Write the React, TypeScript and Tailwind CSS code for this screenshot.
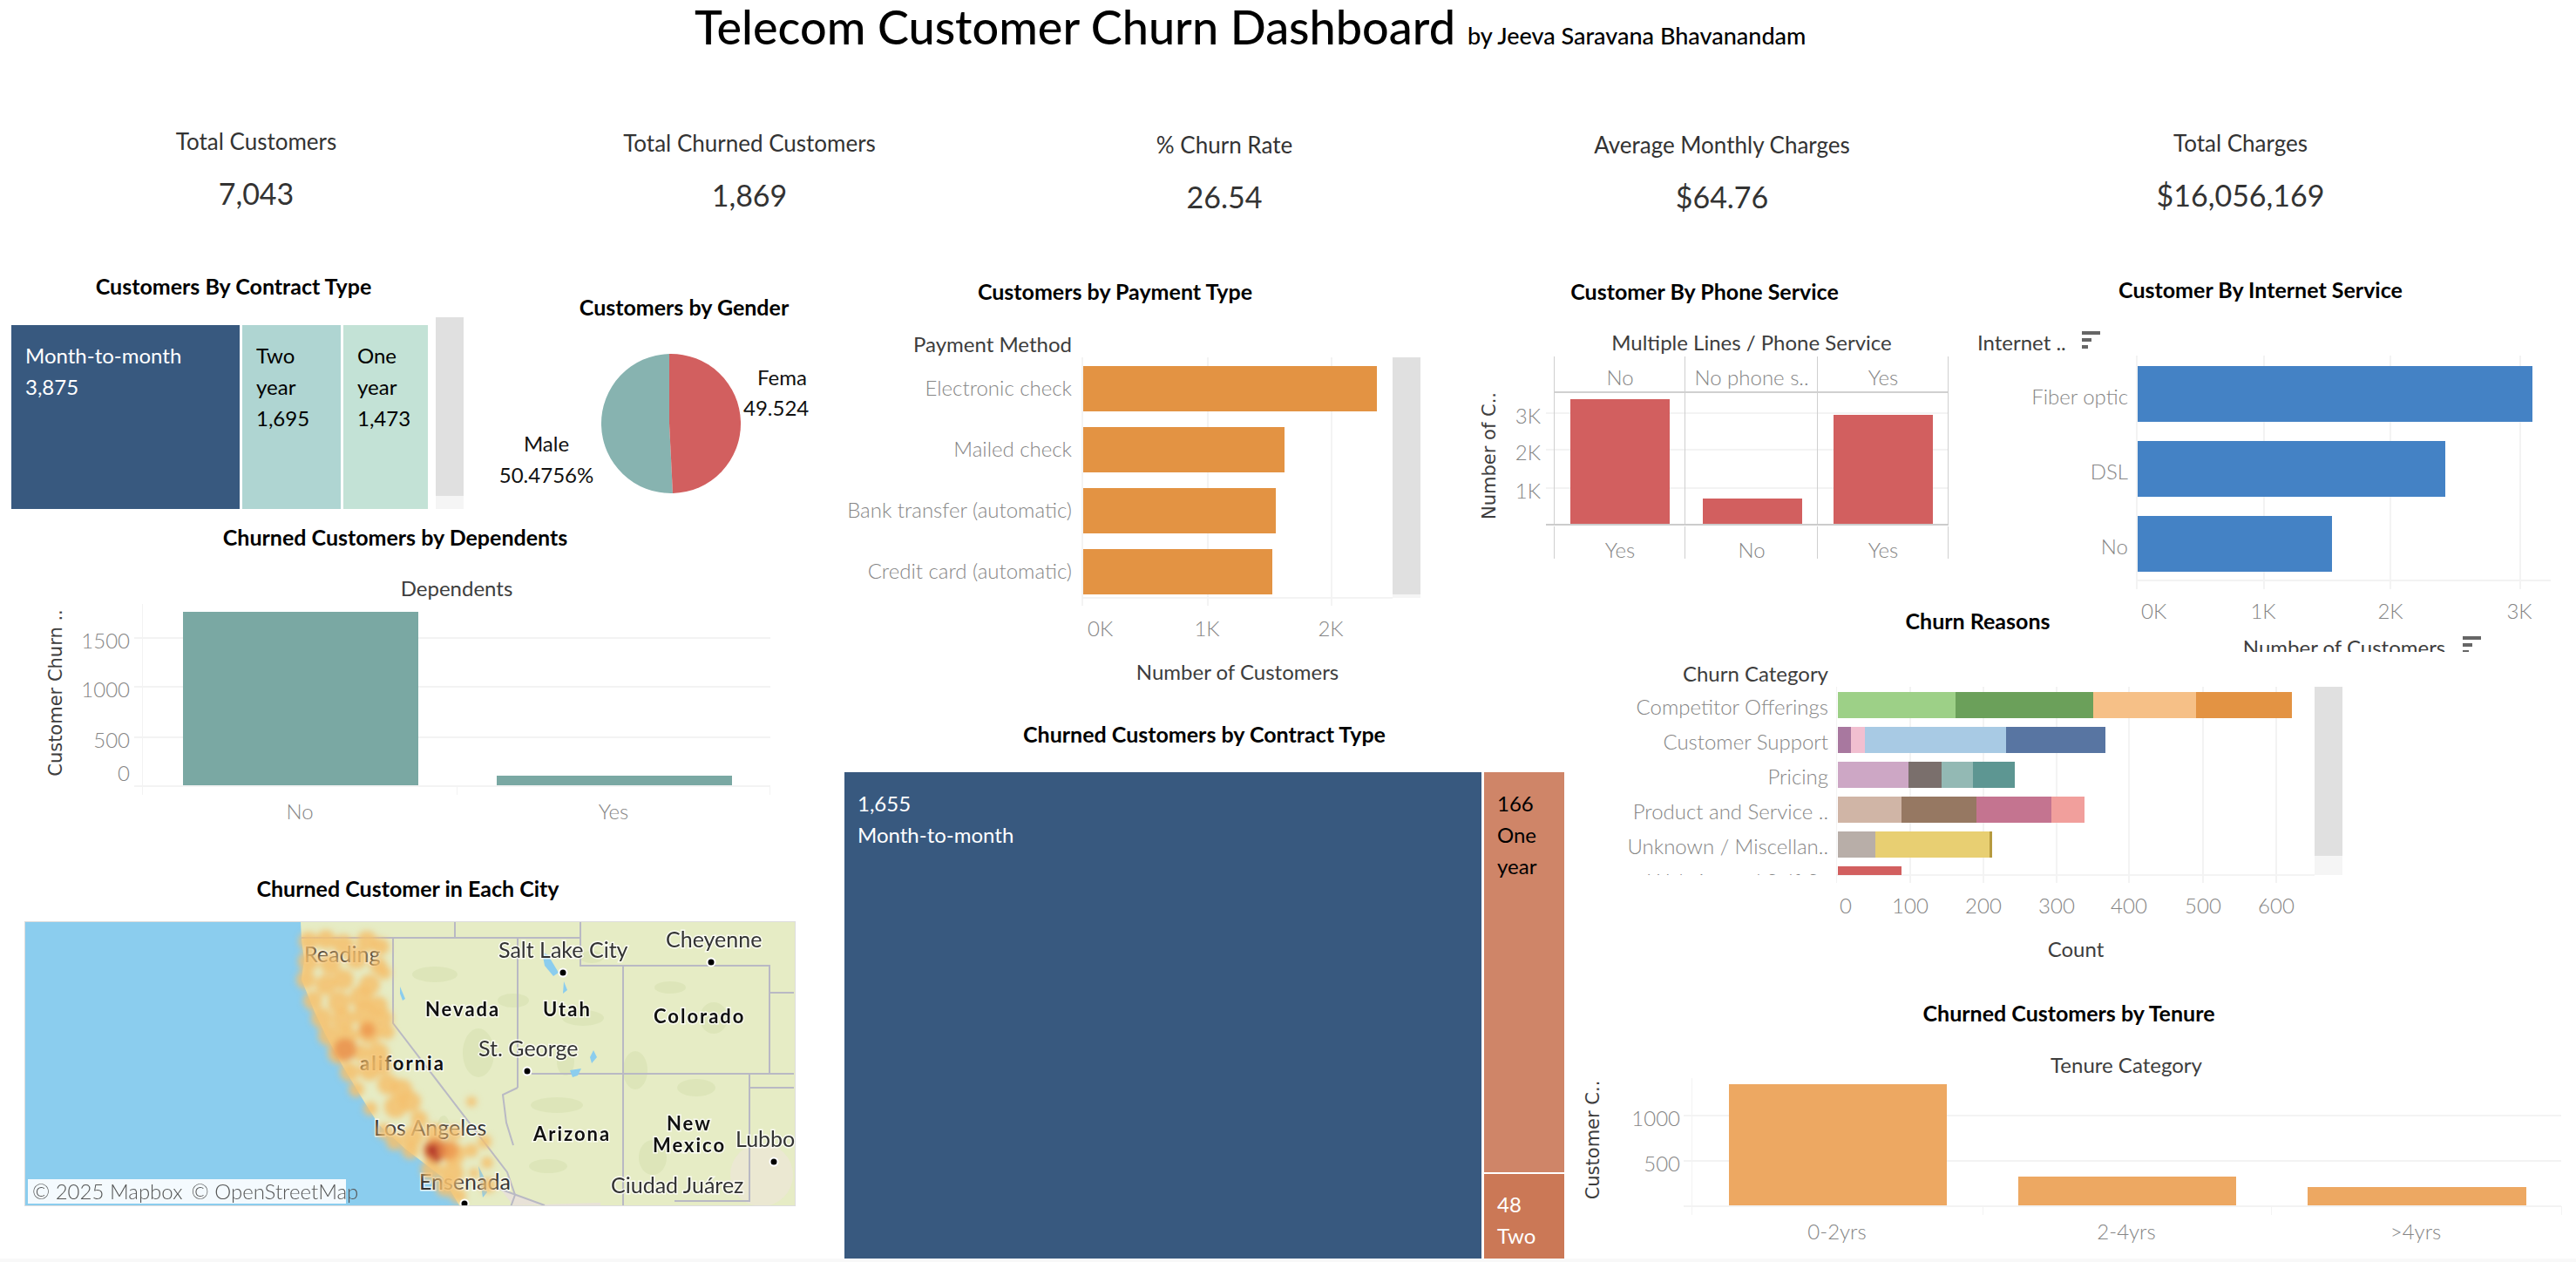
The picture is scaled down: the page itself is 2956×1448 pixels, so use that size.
import React from 'react'

const GRID = '#f3f3f3'
const AXIS = '#858585'
const DARK = '#3d3d3d'

type TxtProps = {
    x: number
    y: number
    children: React.ReactNode
    a?: 'start' | 'middle' | 'end'
    s?: number
    c?: string
    w?: number
    rot?: boolean
    wide?: boolean
}

// all chart svgs use page coordinates through their viewBox
function Txt({ x, y, children, a = 'start', s = 24, c = AXIS, w = 300, rot, wide }: TxtProps) {
    return (
        <text
            x={x}
            y={y}
            textAnchor={a}
            dominantBaseline="central"
            fontSize={s}
            fill={c}
            fontWeight={w}
            fontFamily={wide ? "'DejaVu Sans', sans-serif" : undefined}
            transform={rot ? `rotate(-90 ${x} ${y})` : undefined}
        >
            {children}
        </text>
    )
}

function Rect({ x1, y1, x2, y2, fill }: { x1: number; y1: number; x2: number; y2: number; fill: string }) {
    return <rect x={x1} y={y1} width={x2 - x1} height={y2 - y1} fill={fill} />
}

function SortIcon({ x, y }: { x: number; y: number }) {
    return (
        <g fill="#666666">
            <rect x={x} y={y} width={21} height={4} />
            <rect x={x} y={y + 8} width={11} height={4} />
            <rect x={x} y={y + 16} width={7} height={4} />
        </g>
    )
}

function Title({ className, children }: { className: string; children: React.ReactNode }) {
    return <h2 className={`text-center text-[25px] leading-[30px] font-bold text-black ${className}`}>{children}</h2>
}

function Kpi({ label, value, className }: { label: string; value: string; className: string }) {
    return (
        <div className={`text-center text-[#333333] ${className}`}>
            <div className="text-[26px] leading-[32px]">{label}</div>
            <div className="mt-[22px] text-[34px] leading-[44px]">{value}</div>
        </div>
    )
}

function ContractTreemap() {
    return (
        <div className="flex h-[211px] w-[478px] gap-[3px] text-[24px] leading-[36px]">
            <div className="w-[262px] bg-[#38597f] pt-[17px] pl-[16px] text-white">
                <div>Month-to-month</div>
                <div>3,875</div>
            </div>
            <div className="w-[113px] bg-[#afd5d2] pt-[17px] pl-[16px] text-black">
                <div>Two</div>
                <div>year</div>
                <div>1,695</div>
            </div>
            <div className="w-[97px] bg-[#c3e2d6] pt-[17px] pl-[16px] text-black">
                <div>One</div>
                <div>year</div>
                <div>1,473</div>
            </div>
        </div>
    )
}

function GenderPie() {
    return (
        <svg viewBox="536 400 400 180" className="mt-[33px] h-[180px] w-[400px]">
            <path d="M768 486 L768 406 A80 80 0 0 0 772 566 Z" fill="#87b3b0" />
            <path d="M768 486 L768 406 A80 80 0 0 1 772 566 Z" fill="#d25f5f" />
            <Txt x={869} y={432} c="#111111" w={400}>Fema</Txt>
            <Txt x={853} y={467} c="#111111" w={400}>49.524</Txt>
            <Txt x={627} y={508} a="middle" c="#111111" w={400}>Male</Txt>
            <Txt x={627} y={544} a="middle" c="#111111" w={400}>50.4756%</Txt>
        </svg>
    )
}

function DependentsChart() {
    return (
        <svg viewBox="0 640 936 300" className="h-[300px] w-[936px]">
            <Txt x={524} y={674} a="middle" c={DARK} w={400}>Dependents</Txt>
            <Rect x1={163} y1={693} x2={164} y2={912} fill={GRID} />
            <Rect x1={524} y1={902} x2={525} y2={912} fill={GRID} />
            <Rect x1={883} y1={902} x2={884} y2={912} fill={GRID} />
            {[732, 788, 846, 902].map(y => <Rect key={y} x1={154} y1={y - 1} x2={884} y2={y + 1} fill={GRID} />)}
            <Rect x1={210} y1={702} x2={480} y2={901} fill="#7aa8a3" />
            <Rect x1={570} y1={890} x2={840} y2={901} fill="#7aa8a3" />
            <Txt x={149} y={734} a="end">1500</Txt>
            <Txt x={149} y={790} a="end">1000</Txt>
            <Txt x={149} y={848} a="end">500</Txt>
            <Txt x={149} y={886} a="end">0</Txt>
            <Txt x={344} y={930} a="middle">No</Txt>
            <Txt x={704} y={930} a="middle">Yes</Txt>
            <Txt x={64} y={795} a="middle" s={21} c={DARK} w={400} rot wide>Customer Churn ..</Txt>
        </svg>
    )
}

const heat: [number, number, number][] = [
    [325, 22, 11], [345, 20, 11], [365, 26, 12], [392, 22, 12], [408, 28, 10],
    [325, 45, 12], [350, 48, 12], [380, 42, 12], [405, 50, 10],
    [322, 66, 11], [345, 72, 12], [365, 66, 12], [395, 72, 12], [412, 58, 8],
    [330, 90, 11], [360, 92, 13], [385, 86, 13], [405, 96, 11],
    [340, 110, 12], [365, 112, 13], [390, 106, 14], [412, 110, 10],
    [348, 130, 12], [370, 132, 12], [395, 126, 14], [415, 126, 9],
    [360, 150, 13], [385, 150, 10], [405, 150, 12],
    [372, 172, 11], [395, 170, 12], [410, 165, 10],
    [380, 192, 9], [416, 186, 12], [432, 192, 12],
    [396, 214, 8], [425, 212, 13], [442, 206, 12], [452, 226, 10], [512, 206, 6],
    [412, 240, 9], [424, 252, 10], [445, 246, 12], [470, 242, 11], [492, 242, 9], [527, 252, 8],
    [442, 262, 10], [470, 262, 14], [492, 266, 13], [512, 262, 8],
    [466, 284, 12], [490, 288, 13], [482, 304, 11], [497, 314, 9], [530, 276, 7], [515, 288, 6], [531, 302, 9],
]

const patches: [number, number, number, number][] = [
    [470, 60, 26, 9], [560, 90, 18, 8], [640, 110, 24, 9], [700, 170, 14, 22], [770, 190, 22, 10],
    [610, 210, 30, 9], [520, 150, 18, 28], [720, 270, 16, 20], [600, 280, 22, 8], [790, 110, 16, 18],
    [650, 40, 14, 7], [480, 240, 8, 18], [740, 75, 18, 7], [620, 160, 10, 16],
]

function MapLabel({ x, y, children, w = 400, bold }: { x: number; y: number; children: React.ReactNode; w?: number; bold?: boolean }) {
    return (
        <text
            x={x}
            y={y}
            dominantBaseline="central"
            fontSize={bold ? 22 : 25}
            fontWeight={bold ? 700 : w}
            letterSpacing={bold ? 2 : 0}
            fill={bold ? '#111111' : '#333333'}
            stroke="#ffffff"
            strokeOpacity={0.75}
            strokeWidth={3}
            paintOrder="stroke"
        >
            {children}
        </text>
    )
}

function CityMap() {
    return (
        <div className="relative ml-[28px] h-[327px] w-[885px] border border-[#dddddd]">
            <svg viewBox="0 0 883 325" className="h-[325px] w-[883px]">
                <defs>
                    <filter id="heatBlur"><feGaussianBlur stdDeviation="3.5" /></filter>
                </defs>
                <rect width={883} height={325} fill="#e6ecc5" />
                {patches.map(([x, y, rx, ry], i) => <ellipse key={i} cx={x} cy={y} rx={rx} ry={ry} fill="#d9e2b4" opacity={0.7} />)}
                <ellipse cx={845} cy={290} rx={36} ry={36} fill="#ebe8d2" />
                <path d="M545 306 L596 325 L660 325 L660 322 L560 325 Z" fill="#e8e2d8" />
                <path d="M316 0 L317 20 L320 43 L317 66 L332 103 L345 130 L363 163 L387 203 L406 233 L436 260 L479 293 L498 325 L0 325 L0 0 Z" fill="#8bcdee" />
                <g fill="none" stroke="#b9b9c4" strokeWidth={2}>
                    <path d="M317 18 L637 18 M493 0 L493 18 M637 0 L637 50 L854 50 L854 174 M581 174 L882 174 M854 81 L882 81 M686 50 L686 325 M831 174 L831 320 L745 320 M831 190 L882 190 M565 18 L565 190" />
                    <path d="M422 18 L422 116 L553 287 L562 313 L544 363" transform="translate(0 -57) translate(0 57)" />
                    <path d="M544 306 L596 325" />
                    <path d="M565 190 L548 198 L552 230 L560 256" />
                </g>
                <g fill="#8bcdee">
                    <path d="M593 34 L600 38 L612 58 L606 62 L596 50 Z" />
                    <path d="M618 68 L622 78 L617 82 Z" />
                    <path d="M430 74 L436 88 L433 90 L430 82 Z" />
                    <path d="M652 147 L656 155 L650 162 L648 155 Z" />
                    <path d="M625 170 L638 168 L634 176 L628 178 Z" />
                    <path d="M520 280 L526 292 L530 310 L525 316 L522 296 Z" />
                </g>
                <MapLabel x={320} y={36}>Reading</MapLabel>
                <MapLabel x={384} y={161} bold>alifornia</MapLabel>
                <MapLabel x={400} y={235}>Los Angeles</MapLabel>
                <MapLabel x={452} y={297}>Ensenada</MapLabel>
                <g filter="url(#heatBlur)">
                    {heat.map(([x, y, r], i) => <circle key={i} cx={x} cy={y} r={r} fill="#f5bf6c" opacity={0.85} />)}
                    <circle cx={367} cy={146} r={13} fill="#ea9a55" />
                    <circle cx={393} cy={124} r={9} fill="#ee9f55" />
                    <circle cx={486} cy={262} r={11} fill="#ee9f55" />
                    <circle cx={470} cy={262} r={13} fill="#e07f45" />
                    <circle cx={467} cy={262} r={7} fill="#b5392c" />
                    <circle cx={472} cy={272} r={4} fill="#b5392c" />
                </g>
                <MapLabel x={543} y={31}>Salt Lake City</MapLabel>
                <MapLabel x={735} y={19}>Cheyenne</MapLabel>
                <MapLabel x={459} y={99} bold>Nevada</MapLabel>
                <MapLabel x={594} y={99} bold>Utah</MapLabel>
                <MapLabel x={721} y={107} bold>Colorado</MapLabel>
                <MapLabel x={520} y={144}>St. George</MapLabel>
                <MapLabel x={583} y={242} bold>Arizona</MapLabel>
                <MapLabel x={736} y={230} bold>New</MapLabel>
                <MapLabel x={720} y={255} bold>Mexico</MapLabel>
                <MapLabel x={815} y={248}>Lubbo</MapLabel>
                <MapLabel x={672} y={301}>Ciudad Juárez</MapLabel>
                <g fill="#000000" stroke="#ffffff" strokeWidth={2}>
                    <circle cx={787} cy={46} r={4.5} />
                    <circle cx={617} cy={58} r={4.5} />
                    <circle cx={576} cy={171} r={4.5} />
                    <circle cx={859} cy={275} r={4.5} />
                    <circle cx={504} cy={323} r={4.5} />
                </g>
            </svg>
            <div className="absolute top-[295px] left-[3px] flex h-[28px] w-[365px] items-center gap-[10px] bg-white/90 pl-[5px] text-[24px] leading-none font-light whitespace-nowrap text-[#555555]">
                <span>© 2025 Mapbox</span>
                <span>© OpenStreetMap</span>
            </div>
        </div>
    )
}

function PaymentChart() {
    const rows: [string, number, number, number][] = [
        ['Electronic check', 420, 472, 1580],
        ['Mailed check', 490, 542, 1474],
        ['Bank transfer (automatic)', 560, 612, 1464],
        ['Credit card (automatic)', 630, 682, 1460],
    ]
    return (
        <svg viewBox="936 349 662 440" className="h-[440px] w-[662px]">
            <Txt x={1230} y={394} a="end" c={DARK} w={400}>Payment Method</Txt>
            {[1242, 1386, 1528].map(x => <Rect key={x} x1={x - 1} y1={410} x2={x + 1} y2={695} fill={GRID} />)}
            <Rect x1={1241} y1={685} x2={1598} y2={687} fill={GRID} />
            {rows.map(([label, y1, y2, x2]) => (
                <g key={label}>
                    <Rect x1={1243} y1={y1} x2={x2} y2={y2} fill="#e39343" />
                    <Txt x={1230} y={(y1 + y2) / 2 - 2} a="end">{label}</Txt>
                </g>
            ))}
            <Txt x={1248} y={720}>0K</Txt>
            <Txt x={1385} y={720} a="middle">1K</Txt>
            <Txt x={1527} y={720} a="middle">2K</Txt>
            <Txt x={1420} y={770} a="middle" c={DARK} w={400}>Number of Customers</Txt>
        </svg>
    )
}

function PhoneChart() {
    const cols: [number, number, number, string, string][] = [
        [1802, 1916, 458, 'No', 'Yes'],
        [1954, 2068, 572, 'No phone s..', 'No'],
        [2104, 2218, 476, 'Yes', 'Yes'],
    ]
    const centers = [1859, 2010, 2161]
    return (
        <svg viewBox="1640 349 610 300" className="h-[300px] w-[610px]">
            <Txt x={2010} y={392} a="middle" c={DARK} w={400}>Multiple Lines  /  Phone Service</Txt>
            {[474, 516, 560].map(y => <Rect key={y} x1={1774} y1={y - 1} x2={2236} y2={y + 1} fill={GRID} />)}
            {[1784, 1934, 2086, 2236].map(x => (
                <g key={x}>
                    <Rect x1={x - 1} y1={409} x2={x} y2={602} fill="#cfcfcf" />
                    <Rect x1={x - 1} y1={604} x2={x} y2={641} fill="#cfcfcf" />
                </g>
            ))}
            <Rect x1={1784} y1={449} x2={2236} y2={451} fill="#d0d0d0" />
            {cols.map(([x1, x2, top, head, foot], i) => (
                <g key={x1}>
                    <Rect x1={x1} y1={top} x2={x2} y2={601} fill="#d25f5f" />
                    <Txt x={centers[i]} y={432} a="middle">{head}</Txt>
                    <Txt x={centers[i]} y={630} a="middle">{foot}</Txt>
                </g>
            ))}
            <Rect x1={1774} y1={601} x2={2236} y2={603} fill="#cccccc" />
            <Txt x={1768} y={476} a="end">3K</Txt>
            <Txt x={1768} y={518} a="end">2K</Txt>
            <Txt x={1768} y={562} a="end">1K</Txt>
            <Txt x={1709} y={523} a="middle" s={21} c={DARK} w={400} rot wide>Number of C..</Txt>
        </svg>
    )
}

function InternetChart() {
    const rows: [string, number, number, number][] = [
        ['Fiber optic', 420, 484, 2906],
        ['DSL', 506, 570, 2806],
        ['No', 592, 656, 2676],
    ]
    return (
        <svg viewBox="2250 347 706 401" className="h-[401px] w-[706px]">
            <Txt x={2269} y={392} c={DARK} w={400}>Internet ..</Txt>
            <SortIcon x={2389} y={380} />
            {[2452, 2598, 2743, 2892].map(x => <Rect key={x} x1={x - 1} y1={408} x2={x + 1} y2={676} fill={GRID} />)}
            <Rect x1={2451} y1={665} x2={2927} y2={667} fill={GRID} />
            {rows.map(([label, y1, y2, x2]) => (
                <g key={label}>
                    <Rect x1={2453} y1={y1} x2={x2} y2={y2} fill="#4482c5" />
                    <Txt x={2442} y={(y1 + y2) / 2 + 2} a="end">{label}</Txt>
                </g>
            ))}
            <Txt x={2457} y={700}>0K</Txt>
            <Txt x={2597} y={700} a="middle">1K</Txt>
            <Txt x={2743} y={700} a="middle">2K</Txt>
            <Txt x={2891} y={700} a="middle">3K</Txt>
            <Txt x={2690} y={742} a="middle" c={DARK} w={400}>Number of Customers</Txt>
            <SortIcon x={2826} y={730} />
        </svg>
    )
}

function ChurnChart() {
    const rows: { label: string; y1: number; y2: number; parts: [number, string][] }[] = [
        { label: 'Competitor Offerings', y1: 794, y2: 824, parts: [[2244, '#9dd087'], [2402, '#6ba05a'], [2520, '#f6c087'], [2630, '#e39343']] },
        { label: 'Customer Support', y1: 834, y2: 864, parts: [[2124, '#a8789f'], [2140, '#f1bfd0'], [2302, '#a8cae4'], [2416, '#5875a2']] },
        { label: 'Pricing', y1: 874, y2: 904, parts: [[2190, '#cda7c5'], [2228, '#7a6f6c'], [2264, '#93b9b4'], [2312, '#5d9692']] },
        { label: 'Product and Service ..', y1: 914, y2: 944, parts: [[2182, '#d0b5a6'], [2268, '#967862'], [2354, '#c47490'], [2392, '#f19f9c']] },
        { label: 'Unknown / Miscellan..', y1: 954, y2: 984, parts: [[2152, '#b8aea8'], [2283, '#e8cf72'], [2286, '#b69a3e']] },
    ]
    const ticks: [number, string][] = [[2192, '100'], [2276, '200'], [2360, '300'], [2443, '400'], [2528, '500'], [2612, '600']]
    return (
        <svg viewBox="1800 727 856 380" className="h-[380px] w-[856px]">
            <defs>
                <clipPath id="churnClip"><rect x={1800} y={780} width={856} height={224} /></clipPath>
            </defs>
            <Txt x={2098} y={772} a="end" c={DARK} w={400}>Churn Category</Txt>
            <Rect x1={2107} y1={788} x2={2108} y2={1013} fill={GRID} />
            {ticks.map(([x]) => <Rect key={x} x1={x - 1} y1={788} x2={x + 1} y2={1013} fill={GRID} />)}
            <Rect x1={2107} y1={1003} x2={2656} y2={1005} fill={GRID} />
            {rows.map(r => {
                let from = 2109
                return (
                    <g key={r.label}>
                        {r.parts.map(([to, fill]) => {
                            const seg = <Rect key={to} x1={from} y1={r.y1} x2={to} y2={r.y2} fill={fill} />
                            from = to
                            return seg
                        })}
                        <Txt x={2098} y={(r.y1 + r.y2) / 2 + 1} a="end">{r.label}</Txt>
                    </g>
                )
            })}
            <g clipPath="url(#churnClip)">
                <Rect x1={2109} y1={994} x2={2182} y2={1004} fill="#d25f5f" />
                <Txt x={2098} y={1010} a="end">Website and Self-S..</Txt>
            </g>
            <Txt x={2118} y={1038} a="middle">0</Txt>
            {ticks.map(([x, t]) => <Txt key={t} x={x} y={1038} a="middle">{t}</Txt>)}
            <Txt x={2382} y={1088} a="middle" c={DARK} w={400}>Count</Txt>
        </svg>
    )
}

function TenureChart() {
    const bars: [number, number, number, string, number][] = [
        [1984, 2234, 1244, '0-2yrs', 2108],
        [2316, 2566, 1350, '2-4yrs', 2440],
        [2648, 2899, 1362, '>4yrs', 2772],
    ]
    return (
        <svg viewBox="1800 1200 1156 230" className="h-[230px] w-[1156px]">
            <Txt x={2440} y={1221} a="middle" c={DARK} w={400}>Tenure Category</Txt>
            <Rect x1={1941} y1={1237} x2={1942} y2={1394} fill={GRID} />
            {[2275, 2606, 2939].map(x => <Rect key={x} x1={x} y1={1384} x2={x + 1} y2={1394} fill={GRID} />)}
            {[1280, 1332, 1384].map(y => <Rect key={y} x1={1932} y1={y - 1} x2={2939} y2={y + 1} fill={GRID} />)}
            {bars.map(([x1, x2, top, label, cx]) => (
                <g key={label}>
                    <Rect x1={x1} y1={top} x2={x2} y2={1383} fill="#eda862" />
                    <Txt x={cx} y={1412} a="middle">{label}</Txt>
                </g>
            ))}
            <Txt x={1928} y={1282} a="end">1000</Txt>
            <Txt x={1928} y={1334} a="end">500</Txt>
            <Txt x={1828} y={1308} a="middle" s={21} c={DARK} w={400} rot wide>Customer C..</Txt>
        </svg>
    )
}

export default function App() {
    return (
        <div className="flex h-[1448px] w-[2956px] flex-col overflow-hidden bg-white font-['Lato',sans-serif]">
            <header className="flex h-[62px] items-baseline gap-[14px] pl-[797px] text-black">
                <h1 className="text-[54px] leading-[62px] font-medium whitespace-nowrap">Telecom Customer Churn Dashboard</h1>
                <span className="text-[27px] font-medium whitespace-nowrap">by Jeeva Saravana Bhavanandam</span>
            </header>

            <section className="flex h-[238px]">
                <Kpi className="w-[588px] pt-[84px]" label="Total Customers" value="7,043" />
                <Kpi className="w-[544px] pt-[86px]" label="Total Churned Customers" value="1,869" />
                <Kpi className="w-[546px] pt-[88px]" label="% Churn Rate" value="26.54" />
                <Kpi className="w-[596px] pt-[88px]" label="Average Monthly Charges" value="$64.76" />
                <Kpi className="w-[594px] pt-[86px]" label="Total Charges" value="$16,056,169" />
            </section>

            <main className="flex flex-1">
                <div className="w-[936px] shrink-0">
                    <div className="flex h-[300px]">
                        <div className="w-[536px]">
                            <Title className="pt-[13px]">Customers By Contract Type</Title>
                            <div className="ml-[13px] flex items-start gap-[9px] pt-[21px]">
                                <div className="mt-[9px]"><ContractTreemap /></div>
                                <div className="w-[32px]">
                                    <div className="h-[205px] bg-[#e0e0e0]" />
                                    <div className="h-[15px] bg-[#f5f5f5]" />
                                </div>
                            </div>
                        </div>
                        <div className="w-[400px]">
                            <Title className="pt-[37px] pl-[98px]">Customers by Gender</Title>
                            <GenderPie />
                        </div>
                    </div>
                    <Title className="w-[907px] pt-[1px]">Churned Customers by Dependents</Title>
                    <div className="mt-[9px]"><DependentsChart /></div>
                    <Title className="w-[936px] pt-[64px]">Churned Customer in Each City</Title>
                    <div className="mt-[23px]"><CityMap /></div>
                </div>

                <div className="flex-1">
                    <div className="flex h-[510px]">
                        <div className="w-[704px]">
                            <Title className="w-[687px] pt-[19px]">Customers by Payment Type</Title>
                            <div className="flex">
                                <PaymentChart />
                                <div className="mt-[61px] w-[32px]">
                                    <div className="h-[272px] bg-[#e0e0e0]" />
                                    <div className="h-[4px] bg-[#f5f5f5]" />
                                </div>
                            </div>
                        </div>
                        <div className="w-[610px]">
                            <Title className="pt-[19px] pl-[22px]">Customer By Phone Service</Title>
                            <PhoneChart />
                        </div>
                        <div className="w-[706px]">
                            <Title className="w-[688px] pt-[17px]">Customer By Internet Service</Title>
                            <InternetChart />
                        </div>
                    </div>

                    <div className="flex">
                        <div className="w-[864px] pl-[33px]">
                            <div className="w-[826px]">
                                <Title className="pt-[17px]">Churned Customers by Contract Type</Title>
                                <div className="mt-[29px] flex h-[558px] gap-[3px] text-[24px] leading-[36px]">
                                    <div className="w-[731px] bg-[#38597f] pt-[18px] pl-[15px] text-white">
                                        <div>1,655</div>
                                        <div>Month-to-month</div>
                                    </div>
                                    <div className="flex w-[92px] flex-col gap-[2px]">
                                        <div className="flex-1 bg-[#cf8568] pt-[18px] pl-[15px] text-black">
                                            <div>166</div>
                                            <div>One</div>
                                            <div>year</div>
                                        </div>
                                        <div className="h-[97px] bg-[#cb7856] pt-[17px] pl-[15px] text-white">
                                            <div>48</div>
                                            <div>Two</div>
                                        </div>
                                    </div>
                                </div>
                            </div>
                        </div>
                        <div className="relative z-10 -mt-[113px] w-[1156px]">
                            <Title className="w-[939px]">Churn Reasons</Title>
                            <div className="flex">
                                <ChurnChart />
                                <div className="mt-[61px] w-[32px]">
                                    <div className="h-[194px] bg-[#e0e0e0]" />
                                    <div className="h-[22px] bg-[#f5f5f5]" />
                                </div>
                            </div>
                            <Title className="w-[1148px] pt-[40px]">Churned Customers by Tenure</Title>
                            <div className="mt-[23px]"><TenureChart /></div>
                        </div>
                    </div>
                </div>
            </main>

            <div className="h-[4px] bg-[#f8f8f8]" />
        </div>
    )
}
